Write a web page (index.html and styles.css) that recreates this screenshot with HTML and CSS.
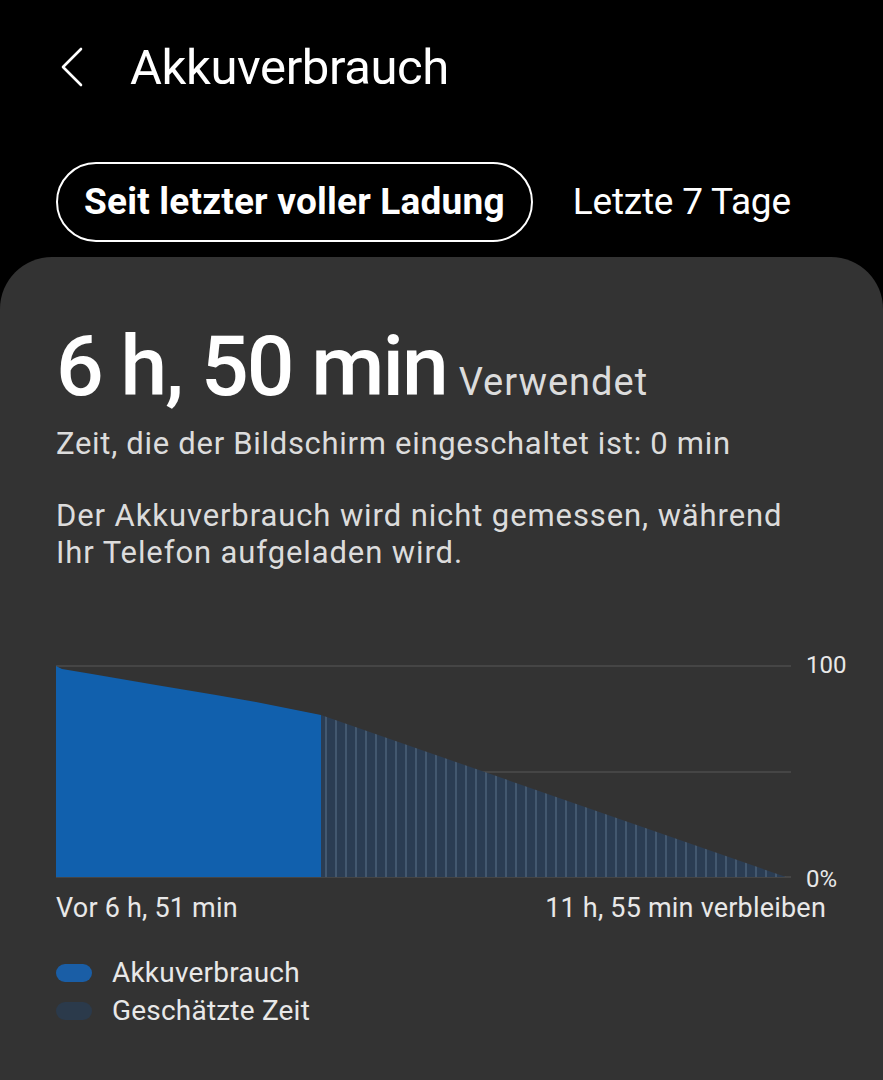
FILE: index.html
```html
<!DOCTYPE html>
<html lang="de">
<head>
<meta charset="utf-8">
<title>Akkuverbrauch</title>
<link rel="stylesheet" href="styles.css">
</head>
<body>
<header class="appbar">
  <svg class="back" width="24" height="40" viewBox="0 0 24 40"><path d="M21 2 L3 20 L21 38" fill="none" stroke="#fff" stroke-width="2.6" stroke-linecap="round" stroke-linejoin="round"/></svg>
  <h1 class="title">Akkuverbrauch</h1>
</header>
<nav class="tabs">
  <span class="tab active">Seit letzter voller Ladung</span>
  <span class="tab">Letzte 7 Tage</span>
</nav>
<main class="card">
  <div class="usage"><span class="big">6 h, 50 min</span><span class="used">Verwendet</span></div>
  <p class="screen">Zeit, die der Bildschirm eingeschaltet ist: 0 min</p>
  <p class="note">Der Akkuverbrauch wird nicht gemessen, während Ihr Telefon aufgeladen wird.</p>
  <div class="chart">
    <svg class="plot" width="735" height="214" viewBox="0 0 735 214">
      <defs>
        <pattern id="stripes" width="10" height="214" patternUnits="userSpaceOnUse" x="265">
          <rect width="10" height="214" fill="#2b3d53"/>
          <rect x="4" width="2" height="214" fill="#43586f"/>
        </pattern>
      </defs>
      <line x1="0" y1="1" x2="735" y2="1" stroke="#454545" stroke-width="2"/>
      <line x1="0" y1="107" x2="735" y2="107" stroke="#454545" stroke-width="2"/>
      <line x1="0" y1="212" x2="735" y2="212" stroke="#454545" stroke-width="2"/>
      <path d="M265 50 L730 212 L265 212 Z" fill="url(#stripes)"/>
      <path d="M0 1 L6 4 L36 9 L100 20 L160 30 L200 37 L240 45 L265 50 L265 212 L0 212 Z" fill="#1160ad"/>
    </svg>
    <div class="axis"><span>100</span><span>0%</span></div>
  </div>
  <div class="xlabels"><span>Vor 6 h, 51 min</span><span>11 h, 55 min verbleiben</span></div>
  <ul class="legend">
    <li><span class="swatch blue"></span>Akkuverbrauch</li>
    <li><span class="swatch dim"></span>Geschätzte Zeit</li>
  </ul>
</main>
</body>
</html>
```
FILE: styles.css
```css
html, body {
  margin: 0;
  padding: 0;
  background: #000;
}
body {
  width: 883px;
  height: 1080px;
  overflow: hidden;
  font-family: Roboto, "Noto Sans", sans-serif;
  color: #fff;
}
.appbar {
  display: flex;
  align-items: center;
  height: 134px;
  padding-left: 60px;
  box-sizing: border-box;
}
.back {
  display: block;
}
.title {
  margin: 0 0 0 46px;
  font-size: 49px;
  font-weight: 400;
  letter-spacing: -0.4px;
}
.tabs {
  display: flex;
  align-items: center;
  padding: 28px 0 0 56px;
  gap: 40px;
}
.tab {
  font-size: 37px;
  letter-spacing: -0.2px;
  line-height: 76px;
}
.tab.active {
  font-weight: 700;
  letter-spacing: 0.2px;
  border: 2px solid #fff;
  border-radius: 40px;
  padding: 0 26px;
}
.card {
  margin-top: 15px;
  background: #333333;
  border-radius: 52px 52px 0 0;
  padding: 62px 0 0 56px;
  height: 823px;
  box-sizing: border-box;
}
.usage {
  display: flex;
  align-items: baseline;
  gap: 12px;
}
.big {
  font-size: 84px;
  font-weight: 500;
  letter-spacing: -2px;
  line-height: 96px;
}
.used {
  font-size: 38px;
  letter-spacing: 1px;
  color: #dcdcdc;
}
.screen {
  margin: 10px 0 0;
  font-size: 31px;
  letter-spacing: 0.7px;
  color: #dcdcdc;
  line-height: 37px;
}
.note {
  margin: 35px 0 0;
  font-size: 31px;
  letter-spacing: 0.9px;
  color: #dcdcdc;
  line-height: 37px;
  width: 760px;
}
.chart {
  display: flex;
  margin-top: 94px;
}
.plot {
  display: block;
  flex-shrink: 0;
}
.axis {
  display: flex;
  flex-direction: column;
  justify-content: space-between;
  margin: -12px 0 -12px 15px;
  font-size: 24px;
  color: #e8e8e8;
  line-height: 24px;
}
.xlabels {
  display: flex;
  justify-content: space-between;
  width: 770px;
  margin-top: 13px;
  font-size: 27px;
  letter-spacing: 0.2px;
  color: #e8e8e8;
}
.legend {
  list-style: none;
  margin: 30px 0 0;
  padding: 0;
}
.legend li {
  display: flex;
  align-items: center;
  font-size: 28px;
  letter-spacing: 0.2px;
  color: #e8e8e8;
  line-height: 38px;
}
.swatch {
  width: 36px;
  height: 18px;
  border-radius: 9px;
  margin-right: 20px;
}
.swatch.blue { background: #1a5ea6; }
.swatch.dim { background: #2b3a4b; }
```
